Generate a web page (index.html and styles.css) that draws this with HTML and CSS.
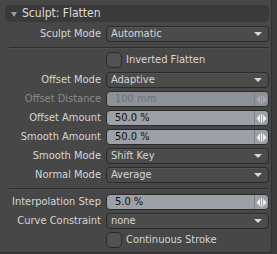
FILE: index.html
```html
<!DOCTYPE html>
<html lang="en">
<head>
<meta charset="UTF-8">
<title>Sculpt: Flatten</title>
<link rel="stylesheet" href="styles.css">
</head>
<body>
<div class="panel">
    <div class="header"><span class="twisty"></span>Sculpt: Flatten</div>

    <div class="row">
        <span class="label">Sculpt Mode</span>
        <div class="popup">Automatic<span class="arrow"></span></div>
    </div>
    <div class="sep first"></div>
    <div class="row check-row">
        <span class="label"></span>
        <label class="check"><span class="box"></span>Inverted Flatten</label>
    </div>
    <div class="row">
        <span class="label">Offset Mode</span>
        <div class="popup">Adaptive<span class="arrow"></span></div>
    </div>
    <div class="row disabled">
        <span class="label">Offset Distance</span>
        <div class="num"><span class="val">100 mm</span><span class="drag"><svg width="11" height="9" viewBox="0 0 11 9"><path d="M4 0.5 L0.5 4.5 L4 8.5 Z M7 0.5 L10.5 4.5 L7 8.5 Z" /><rect x="5" y="0" width="1" height="9" /></svg></span></div>
    </div>
    <div class="row">
        <span class="label">Offset Amount</span>
        <div class="num"><span class="val">50.0 %</span><span class="drag"><svg width="11" height="9" viewBox="0 0 11 9"><path d="M4 0.5 L0.5 4.5 L4 8.5 Z M7 0.5 L10.5 4.5 L7 8.5 Z" /><rect x="5" y="0" width="1" height="9" /></svg></span></div>
    </div>
    <div class="row">
        <span class="label">Smooth Amount</span>
        <div class="num"><span class="val">50.0 %</span><span class="drag"><svg width="11" height="9" viewBox="0 0 11 9"><path d="M4 0.5 L0.5 4.5 L4 8.5 Z M7 0.5 L10.5 4.5 L7 8.5 Z" /><rect x="5" y="0" width="1" height="9" /></svg></span></div>
    </div>
    <div class="row">
        <span class="label">Smooth Mode</span>
        <div class="popup">Shift Key<span class="arrow"></span></div>
    </div>
    <div class="row">
        <span class="label">Normal Mode</span>
        <div class="popup">Average<span class="arrow"></span></div>
    </div>
    <div class="sep"></div>
    <div class="row">
        <span class="label">Interpolation Step</span>
        <div class="num"><span class="val">5.0 %</span><span class="drag"><svg width="11" height="9" viewBox="0 0 11 9"><path d="M4 0.5 L0.5 4.5 L4 8.5 Z M7 0.5 L10.5 4.5 L7 8.5 Z" /><rect x="5" y="0" width="1" height="9" /></svg></span></div>
    </div>
    <div class="row">
        <span class="label">Curve Constraint</span>
        <div class="popup">none<span class="arrow"></span></div>
    </div>
    <div class="row check-row">
        <span class="label"></span>
        <label class="check"><span class="box"></span>Continuous Stroke</label>
    </div>
</div>
</body>
</html>
```
FILE: styles.css
```css
body {
    margin: 0;
    background: #3c3c3c;
    font-family: "DejaVu Sans Condensed", "DejaVu Sans", sans-serif;
    font-size: 11px;
    color: #d6d6d6;
}
.panel {
    width: 272px;
    height: 253px;
    box-sizing: border-box;
    background: #474747;
    border-radius: 0 0 4px 0;
    padding: 5px 2px 0 5px;
    border-right: 1px solid #303030;
    border-bottom: 1px solid #303030;
}
.header {
    height: 17px;
    line-height: 17px;
    background: #3a3a3a;
    border-radius: 5px;
    font-size: 12px;
    color: #dcdcdc;
    display: flex;
    align-items: center;
    margin-bottom: 4px;
}
.twisty {
    width: 0;
    height: 0;
    border-left: 3px solid transparent;
    border-right: 3px solid transparent;
    border-top: 5px solid #9c9c9c;
    margin: 1px 5px 0 6px;
}
.row {
    height: 19px;
    display: flex;
    align-items: flex-start;
}
.check-row {
    height: 20px;
}
.label {
    width: 96px;
    flex: none;
    text-align: right;
    line-height: 16px;
    padding-right: 5px;
    white-space: nowrap;
}
.popup, .num {
    flex: 1;
    height: 16px;
    box-sizing: border-box;
    border: 1px solid #2a2a2a;
    border-radius: 4px;
    line-height: 14px;
    padding-left: 4px;
    position: relative;
}
.popup {
    background: #4b4b4b;
    box-shadow: inset 0 1px 0 #555;
    color: #d6d6d6;
}
.arrow {
    position: absolute;
    right: 6px;
    top: 5px;
    width: 0;
    height: 0;
    border-left: 4px solid transparent;
    border-right: 4px solid transparent;
    border-top: 4px solid #d8d8d8;
}
.num {
    background: #9ba1a7;
    color: #101010;
    display: flex;
    padding-left: 0;
}
.val {
    flex: 1;
    padding-left: 8px;
}
.drag {
    width: 13px;
    border-left: 1px solid #7c8187;
    display: flex;
    align-items: center;
    justify-content: center;
    fill: #eef0f2;
}
.disabled .label {
    color: #8a8a8a;
}
.disabled .num {
    background: #8d9298;
    color: #6c7176;
}
.disabled .drag {
    fill: #a9aeb3;
}
.sep {
    height: 8px;
    box-sizing: border-box;
    padding-top: 2px;
    margin-left: 4px;
}
.sep.first {
    height: 7px;
}
.sep::before {
    content: "";
    display: block;
    height: 1px;
    background: #2e2e2e;
    border-bottom: 1px solid #4e4e4e;
}
.check {
    display: flex;
    align-items: center;
    gap: 4px;
    line-height: 16px;
}
.box {
    width: 16px;
    height: 16px;
    box-sizing: border-box;
    border: 1px solid #2a2a2a;
    border-radius: 5px;
    background: #525252;
}
```
